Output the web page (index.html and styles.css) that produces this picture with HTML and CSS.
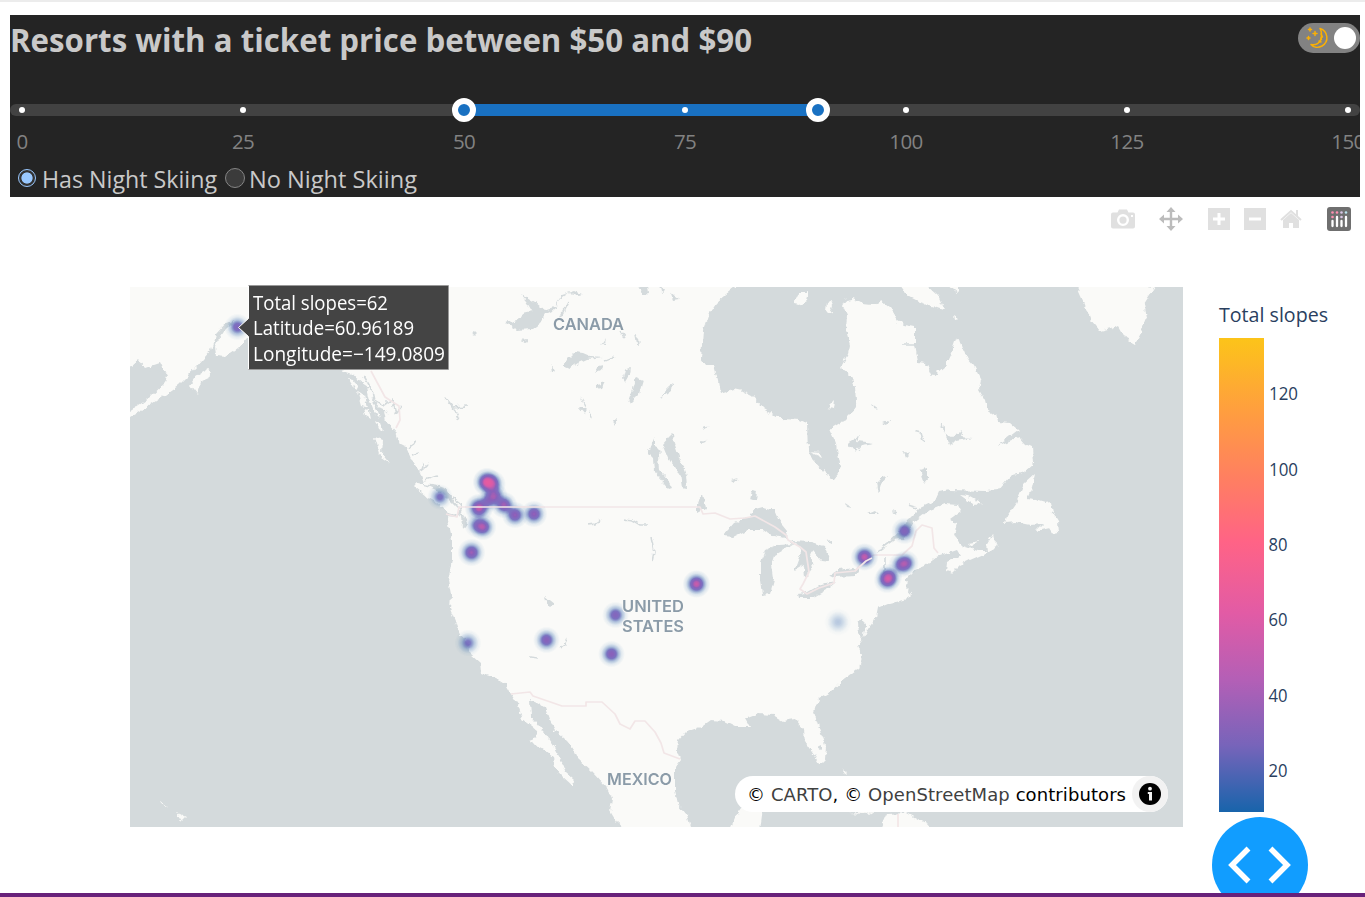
FILE: index.html
```html
<!DOCTYPE html>
<html lang="en">
<head>
<meta charset="utf-8">
<title>Ski resorts</title>
<link rel="stylesheet" href="styles.css">
</head>
<body>
<main class="page">
  <section class="panel">
    <header class="panel-head">
      <h1 class="title"><svg class="title-text" width="760" height="60"><text x="0" y="37" textLength="742" lengthAdjust="spacingAndGlyphs">Resorts with a ticket price between $50 and $90</text></svg></h1>
      <div class="switch">
        <svg width="23" height="23" viewBox="0 0 23 23" fill="none" stroke="#fab005" stroke-width="1.5" stroke-linecap="round" stroke-linejoin="round">
          <path d="M14 1.500c8 2.500 9.500 13 2 17.500c-4 2.200-8.500 1.500-11-1.500c5 1 9-1.500 10-5.500c.8-3.500 1-7-1-10.500z"/>
          <path d="M15 7l1.500 3l-1.500 1l.5 1.500M13 14l2 1"/>
          <path d="M4 1v3M2.500 2.500h3M9 4.500v4M7 6.500h4M2.500 9.500v3M1 11h3"/>
        </svg>
        <span class="switch-knob"></span>
      </div>
    </header>
    <div class="slider">
      <div class="track">
        <span class="range"></span>
        <i class="dot"></i><i class="dot"></i><i class="dot"></i><i class="dot"></i><i class="dot"></i><i class="dot"></i><i class="dot"></i>
        <span class="thumb thumb-min"></span><span class="thumb thumb-max"></span>
      </div>
      <div class="marks"><span>0</span><span>25</span><span>50</span><span>75</span><span>100</span><span>125</span><span>150</span></div>
    </div>
    <div class="radios">
      <span class="radio radio-on"></span><svg width="176" height="34"><text x="0" y="26" textLength="175" lengthAdjust="spacingAndGlyphs">Has Night Skiing</text></svg>
      <span class="radio"></span><svg width="170" height="34"><text x="0" y="26" textLength="168" lengthAdjust="spacingAndGlyphs">No Night Skiing</text></svg>
    </div>
  </section>

  <nav class="modebar">
    <svg class="camera" width="24" height="24" viewBox="0 0 24 24"><path fill="#e0e0e0" fill-rule="evenodd" d="M2 5.500h4.500l1.500-3h8l1.500 3H22q2 0 2 2v12q0 2-2 2H2q-2 0-2-2V7.500q0-2 2-2zM12 7a6 6 0 1 0 0 12a6 6 0 0 0 0-12zm0 2.500a3.600 3.600 0 1 1 0 7.200a3.600 3.600 0 0 1 0-7.200zM20 8v2h2V8z"/></svg>
    <svg class="pan" width="24" height="24" viewBox="0 0 24 24"><path fill="#bcbcbc" d="M12 0l4.500 5H13.200v5.800H19V7.500l5 4.500l-5 4.500V13.200h-5.800V19h3.300L12 24l-4.500-5H10.800v-5.800H5v3.300L0 12l5-4.500V10.800h5.800V5H7.500z"/></svg>
    <svg class="zoom-in" width="22" height="22"><path fill="#e0e0e0" d="M0 0h22v22H0z"/><path fill="#fff" d="M9.500 5h3v4.500h4.500v3h-4.500v4.500h-3v-4.500H5v-3h4.500z"/></svg>
    <svg class="zoom-out" width="22" height="22"><path fill="#e0e0e0" d="M0 0h22v22H0z"/><path fill="#fff" d="M5 9.500h12v3H5z"/></svg>
    <svg class="home" width="22" height="20" viewBox="0 0 22 20"><path fill="#e0e0e0" d="M11 4l8 7v8h-6v-5H9v5H3v-8z"/><path fill="none" stroke="#e0e0e0" stroke-width="2" d="M1 11L11 2l10 9M17 1v6"/></svg>
    <svg class="brand" width="24" height="24"><rect width="24" height="24" rx="3" fill="#6f6f6f"/><path stroke="#fff" stroke-width="2.300" stroke-linecap="round" d="M5.500 14v5M10 10v9M14.500 14v5M19 10v9"/><g fill="#ff8fb1"><circle cx="5.500" cy="5.500" r="1.300"/><circle cx="5.500" cy="10" r="1.300"/><circle cx="10" cy="5.500" r="1.300"/></g><circle cx="14.500" cy="5.500" r="1.300" fill="#d9c6e6"/><circle cx="14.500" cy="10" r="1.300" fill="#d9c6e6"/><circle cx="19" cy="5.500" r="1.300" fill="#b9e3ee"/></svg>
  </nav>

  <section class="plot">
    <div class="map">
      <svg class="map-canvas" viewBox="130 287 1053 540" width="1053" height="540">
        <defs>
          <filter id="coast" x="130" y="287" width="1053" height="540" filterUnits="userSpaceOnUse">
            <feTurbulence type="fractalNoise" baseFrequency=".17" numOctaves="2" seed="4" result="n"/>
            <feDisplacementMap in="SourceGraphic" in2="n" scale="6" xChannelSelector="R" yChannelSelector="G"/>
          </filter>
          <radialGradient id="blob">
            <stop offset="0" stop-color="#fff"/><stop offset=".18" stop-color="#fff" stop-opacity=".9"/><stop offset=".35" stop-color="#fff" stop-opacity=".65"/><stop offset=".5" stop-color="#fff" stop-opacity=".4"/><stop offset=".75" stop-color="#fff" stop-opacity=".1"/><stop offset="1" stop-color="#fff" stop-opacity="0"/>
          </radialGradient>
          <filter id="density" x="130" y="287" width="1053" height="540" filterUnits="userSpaceOnUse" color-interpolation-filters="sRGB">
            <feColorMatrix values="0 0 0 1 0  0 0 0 1 0  0 0 0 1 0  0 0 0 1 0"/>
            <feComponentTransfer>
              <feFuncR type="table" tableValues=".09 .2 .4 .54 .84 .96"/>
              <feFuncG type="table" tableValues=".39 .39 .36 .38 .36 .36"/>
              <feFuncB type="table" tableValues=".67 .68 .72 .73 .66 .6"/>
              <feFuncA type="table" tableValues="0 .35 .86 1 1 1"/>
            </feComponentTransfer>
          </filter>
        </defs>
        <g filter="url(#coast)">
          <path class="water" d="M100 260h1110v600H100z"/>
          <g class="land">
            <path d="M110 270H735L735 287L725 295L716 303L708 315L703 330L701 358L706 365L714 365L718 380L720 393L733 389L742 391L752 396L763 408L782 419L800 420L807 423L808 452L813 460L825 473L834 479L838 474L840 463L837 450L835 440L830 429L845 420L853 412L857 401L856 388L850 375L841 367L848 354L850 345L846 330L847 315L843 306L846 300L853 299L863 304L872 305L881 301L890 308L898 321L905 325L915 327L915 345L918 362L926 363L932 377L945 366L951 353L956 338L960 341L965 353L968 359L974 366L981 380L979 390L985 400L987 409L996 415L998 422L1010 423L1018 430L997 446L1019 437L1025 444L1032 447L1033 464L1024 472L1010 476L998 490L985 491L950 490L939 492L935 501L920 508L910 518L900 531L890 540L904 539L914 522L930 510L945 504L958 505L961 511L950 519L957 524L954 533L957 540L963 546L978 551L987 551L986 545L993 533L995 543L999 546L986 553L970 560L960 565L952 573L946 571L947 563L960 555L957 550L937 557L925 566L915 570L907 578L906 588L912 595L908 599L888 604L878 608L876 618L868 629L864 637L858 645L862 656L859 668L843 680L830 692L818 699L814 712L819 728L826 748L825 760L820 765L814 755L805 742L804 729L795 719L783 721L773 715L758 714L745 719L749 726L735 726L725 721L710 720L700 727L686 732L678 741L677 752L680 760L675 767L675 790L678 804L687 815L692 830H626L616 821L610 811L612 799L606 787L592 772L578 759L574 750L566 740L555 730L549 719L545 708L537 703L530 700L531 716L543 731L553 746L560 758L566 773L574 780L573 786L562 776L555 768L554 757L545 750L529 741L537 738L536 730L523 720L518 705L511 694L506 685L495 678L481 673L480 663L471 655L469 645L460 635L455 621L450 609L451 595L448 580L452 560L452 538L447 516L456 517L462 514L463 529L467 523L462 511L453 500L446 489L438 486L424 484L420 472L412 461L406 447L400 444L396 432L390 425L388 412L380 408L373 400L369 390L357 380L352 374L342 371L340 340L260 335L247 337L238 348L225 357L216 356L215 345L224 331L235 320L226 323L216 334L211 350L203 359L190 374L178 386L162 397L150 405L130 417L110 424V406L130 411L142 403L150 397L165 383L167 377L160 363L145 368L138 360L130 367L110 370z"/>
            <path d="M415 483l12 3l14 6l9 9l9 9l0 6l-10-3l-12-10l-10-6l-11-9z"/>
            <path d="M375 437l8 3l-1 14l8 10l-9-6zM348 378l5 1l5 10l-4-1zM358 391l6 4l3 12l-5-2zM366 388l5 4l2 14l-4-5zM364 408l5 2l2 9l-5-3zM371 404l5 3l4 11l-5-3zM375 420l5 3l3 8l-5-3zM384 410l6 5l2 12l-6-5zM190 385l6-9l12-7l2 8l-9 4l-4 13z"/>
            <path d="M1035 474L1032 487L1027 499L1035 500L1045 503L1051 502L1053 513L1058 521L1059 533L1054 534L1050 528L1036 531L1043 524L1030 525L1015 522L1005 523L1007 516L1016 503L1024 484zM960 495l9 1l14 8l-9 1zM962 537l6 6l12-2l-9 5zM900 285l8 11l12 6l24 8l-6-14l-12-11zM948 285l10 8v-8zM953 316l5 3l-4 1z"/>
            <path d="M1073 280l4 7l7 16l6 16l10 12l12-3l6-3l8 14l9 5l5-9l7-17l-3-14l11-17z"/>
            <path d="M794 304l5-11h10l-2 7l-8 5zM826 303l5-3l2 5l-3 9l-5-3zM828 408l7-7l-1 8zM810 452l10 1l2 4z"/>
            <path d="M730 830l6-15l5-7h22l-3 22zM844 767l2 7l-3-2zM849 753l2 5zM848 813l25-2l-5 3zM880 830l7-16l20-1l22 12v8zM160 801l7 6l-6-3zM176 812l10 5l-4 4z"/>
          </g>
          <g class="water">
            <path d="M520 294l15 9l9 7l10-3l8-12l13-4l7 3l-3 1l-10-2l-9 6l-7 12l-8 4l-5 8l-8 6l-15 1l-12-7l14-3l4-7l9-2l-6-10zM562 366l5-6l8-8l8 1l7 3l14 1l-17 2l-9 4l-9 6zM551 364l4 7l-3 2zM598 367l5-1l-2 4l-7 3zM625 370l5-2l-1 6l-4 7l-2-3zM636 377l7 3l-4 14l-9 9l-2-1l5-13zM670 383l3 1l-1 6l-11 8l5-8zM580 396l6 10l-1 8l-5-6h5zM635 333l4 5l1 7l-3-1zM520 340l8-1l-2 3zM612 419l6-1l-4 6zM589 410l2 4l-2 5zM596 384l9-2l-3 6l-6 1zM606 339l-4 6l3-2zM638 285l5 10l5-1l-1-9zM670 292l9 7l-6 1zM660 285l2 8l3-2zM473 331l3 3l-2 2z"/>
            <path d="M663 444l6-7l4-4l1 9l5 15l7 18l1 13l-5-1l-2-14l-10-12zM648 453l7-17v11l7 4l-4 4l1 15l8 8l5 10l-3 1l-15-18l-1-13z"/>
            <path d="M723 536l11-13l15-6l6-8l8-2l11 3l4 9l9 11l-1 8l-13-2l-9-6h-17l-14 7zM760 563l6-14l12-5l16-1l-12 8l-7 4l-3 9l2 15l-4 15l-8 1l-2-14zM791 541l20 1l13 4l6 15l-9-1l-9-10l-2 5l3 12l-8 12l-1-14l-10 6l8-22zM797 594l10-1l14-8l15-3l-10 8l-14 8l-14 0zM830 575l8-5l15-2l7 1l-4 7l-22 1z"/>
            <path d="M697 503l6-9l3 14l-9 5zM752 490l5 1l-1 10l-6-2zM704 427l6-2l-7 5zM700 440l7 1l-5 2zM739 441l7 1zM731 480l8-2l-5 4zM876 483l6-6l6-1l-7 8l-3 10zM882 423l10-4l-5 6zM872 404l7 5l-5-1zM847 443l12-7l-2 5l17 2l-13 2l-6 7zM940 423l4 10l8 4l10-6l-2 6l12 1l-16 3l-5 5zM920 470l7-2v9l-4 5zM846 504l6 4l-5-1zM868 514l7-3l3 3zM856 526l2 5zM825 541l7-1v3zM893 510l4 3l-3 1zM904 452l6 1l-4 4zM545 597l9 7l-3 2l-5-4zM818 747l4-2v5zM856 622l6-3l4 6l-3 15l-4-6l-1-12z"/>
          </g>
          <path class="river" d="M587 525l8-1l6-4M624 519l8 1l8 5l7 0M651 537l3 15l-2 10M560 648l5-4l3-6M530 657l9 1M907 531l-13 9l-17 12M884 557v17M445 397l8 10l6 13M453 407l14-1M560 318l8-16M605 361l10-4M620 331l5 6M913 431l8 2l3 10M942 423l2 10M908 505l10 3M902 344h14M364 376l8 14l2 10l10 6M384 405l8-6l4 14l5-6M356 380l12 8M371 410l14 14M404 470l6 8M412 455l7-2M408 448l8-6M424 463l-3 8M422 470l6-6M425 480l12-4M452 497l8 6l2 8M150 372l14-1"/>
        </g>
        <g class="border">
          <path d="M371 371l14 26l14 9l1 14l-4 8M446 514l11 3l2-10H700l3 7l12-1l15 6l15-1l10-2l20 11l11 8l2 5l12 7l6 5l3 20l-6 12l-3 5l7 5l12-6l15-5l1-10l20-2l10-12l9-4h28l10-9l4-15l6-6l10 3l2 20l4 5M511 694l19-2l3 4l29 10h24v-4h16l13 12l5 10l10 5l5-8h10l10 11l6 11l3 10l16 6M898 814v15"/>
        </g>
        <g filter="url(#density)" fill="url(#blob)">
          <circle cx="237.500" cy="327" r="13.500" opacity=".52"/><circle cx="440" cy="497" r="13" opacity=".44"/>
          <circle cx="487" cy="482" r="14.500" opacity=".86"/><circle cx="492" cy="484" r="14" opacity=".64"/>
          <circle cx="494" cy="496" r="14" opacity=".65"/><circle cx="488" cy="501" r="12" opacity=".4"/><circle cx="479" cy="508" r="14.500" opacity=".78"/><circle cx="504" cy="505" r="13.500" opacity=".68"/><circle cx="515" cy="515" r="13.500" opacity=".64"/><circle cx="534" cy="514" r="13.500" opacity=".64"/>
          <circle cx="483" cy="527" r="13.500" opacity=".67"/><circle cx="477" cy="525" r="13" opacity=".4"/><circle cx="471.500" cy="552.500" r="14" opacity=".66"/>
          <circle cx="468" cy="643" r="13.500" opacity=".42"/><circle cx="546.500" cy="640" r="13.500" opacity=".59"/><circle cx="615.500" cy="615" r="13.500" opacity=".55"/><circle cx="611.500" cy="654" r="13.500" opacity=".61"/><circle cx="696.500" cy="584" r="14" opacity=".78"/>
          <circle cx="904.500" cy="531" r="13.500" opacity=".55"/><circle cx="864.500" cy="557" r="14" opacity=".77"/><circle cx="906" cy="563" r="13" opacity=".58"/><circle cx="901" cy="565" r="13" opacity=".5"/><circle cx="889" cy="577" r="13.500" opacity=".62"/><circle cx="887" cy="580" r="13.500" opacity=".58"/><circle cx="838" cy="622" r="14" opacity=".19"/>
        </g>
        <path class="border" d="M466 507H544M855 571l11-10l6-3"/>
        <g class="country">
          <text x="553" y="330" textLength="71" lengthAdjust="spacingAndGlyphs">CANADA</text>
          <text x="622" y="612" textLength="62" lengthAdjust="spacingAndGlyphs">UNITED</text>
          <text x="622" y="632" textLength="62" lengthAdjust="spacingAndGlyphs">STATES</text>
          <text x="607" y="785" textLength="65" lengthAdjust="spacingAndGlyphs">MEXICO</text>
        </g>
      </svg>
      <div class="hover">
        <svg width="212" height="88" viewBox="238 284 212 88">
          <path d="M238.500 327.500l10-9V285.500h200v84h-200v-33z" fill="#444" stroke="#fff"/>
          <path d="M248.500 285.500h200v84h-200" fill="none" stroke="#999"/>
          <g class="hover-text"><text x="253" y="310" textLength="135" lengthAdjust="spacingAndGlyphs">Total slopes=62</text><text x="253" y="335" textLength="161" lengthAdjust="spacingAndGlyphs">Latitude=60.96189</text><text x="253" y="361" textLength="192" lengthAdjust="spacingAndGlyphs">Longitude=−149.0809</text></g>
        </svg>
      </div>
      <div class="credits">
        <svg width="379" height="24"><text x="0" y="19" textLength="379">© <tspan class="link">CARTO</tspan>, © <tspan class="link">OpenStreetMap</tspan> contributors</text></svg>
        <span class="info"><svg width="22" height="22"><circle cx="11" cy="11" r="11"/><circle cx="11" cy="5.700" r="1.900" fill="#f2f2f2"/><path d="M8.800 9h4.200v8.500h-3V11H8.800z" fill="#f2f2f2"/></svg></span>
      </div>
    </div>
    <aside class="legend">
      <svg width="140" height="520" viewBox="1215 300 140 520">
        <defs><linearGradient id="scale" x1="0" y1="0" x2="0" y2="1"><stop offset="0" stop-color="#fcc419"/><stop offset=".15" stop-color="#ff9f3e"/><stop offset=".3" stop-color="#ff7e62"/><stop offset=".43" stop-color="#ff6386"/><stop offset=".58" stop-color="#e25ba5"/><stop offset=".72" stop-color="#b45fb6"/><stop offset=".86" stop-color="#7764ba"/><stop offset="1" stop-color="#1864ab"/></linearGradient></defs>
        <rect x="1219" y="338" width="45" height="474" fill="url(#scale)"/>
        <text class="legend-title" x="1219" y="322" textLength="109" lengthAdjust="spacingAndGlyphs">Total slopes</text>
        <g class="legend-tick"><text x="1269" y="400" textLength="29" lengthAdjust="spacingAndGlyphs">120</text><text x="1269" y="476" textLength="29" lengthAdjust="spacingAndGlyphs">100</text><text x="1268.500" y="551" textLength="19" lengthAdjust="spacingAndGlyphs">80</text><text x="1268.500" y="626" textLength="19" lengthAdjust="spacingAndGlyphs">60</text><text x="1268.500" y="702" textLength="19" lengthAdjust="spacingAndGlyphs">40</text><text x="1268.500" y="777" textLength="19" lengthAdjust="spacingAndGlyphs">20</text></g>
      </svg>
    </aside>
  </section>
  <button class="debug"><svg width="96" height="96" fill="none" stroke="#fff" stroke-width="5.500"><path d="M36.500 31.500L20 48l16.500 16.500M58.500 31.500L75 48L58.500 64.500"/></svg></button>
  <footer class="bottom-bar"></footer>
</main>
</body>
</html>
```
FILE: styles.css
```css
* { box-sizing: border-box; }
body { margin: 0; background: #fff; font-family: "Open Sans", "Noto Sans", sans-serif; }
svg { display: block; flex: none; }
.page { position: relative; display: flex; flex-direction: column; width: 1365px; height: 897px; overflow: hidden; border-top: 2px solid #ececec; padding-top: 13px; }
.panel { flex: none; width: 1350px; height: 182px; margin-left: 10px; background: #242424; color: #c9c9c9; overflow: hidden; }
.panel-head { display: flex; justify-content: space-between; height: 83px; }
.title { margin: 0; }
.title-text { fill: #c9c9c9; font: 700 32px "Open Sans", sans-serif; }
.switch { display: flex; align-items: center; justify-content: space-between; width: 62px; height: 30px; margin-top: 8px; padding: 0 4px 0 8px; border-radius: 15px; background: #828282; }
.switch-knob { width: 22px; height: 22px; border-radius: 50%; background: #fff; }
.slider { padding-top: 6px; }
.track { position: relative; display: flex; align-items: center; justify-content: space-between; height: 12px; padding: 0 9px; border-radius: 6px; background: #424242; }
.range { position: absolute; left: 454px; width: 354px; height: 12px; background: #1971c2; }
.dot { position: relative; width: 6px; height: 6px; border-radius: 50%; background: #fff; }
.thumb { position: absolute; width: 24px; height: 24px; border: 6px solid #fff; border-radius: 50%; background: #1971c2; }
.thumb-min { left: 442px; }
.thumb-max { left: 796px; }
.marks { display: flex; justify-content: space-between; height: 47px; padding: 10px 12px 0; color: #828282; font-size: 20.500px; line-height: 31px; letter-spacing: -.6px; }
.marks span { display: flex; justify-content: center; width: 0; }
.radios { display: flex; align-items: center; height: 32px; padding-left: 8px; fill: #c9c9c9; font-size: 23.500px; }
.radio { flex: none; width: 20px; height: 20px; margin: -3px 4px 0 7px; border: 1.500px solid #858585; border-radius: 50%; background: #3b3b3b; }
.radio-on { width: 18px; height: 18px; margin: -3px 6px 0 0; border-color: #99c8ff; background: radial-gradient(circle, #99c8ff 5.200px, #333 6px); }
.modebar { display: flex; align-items: center; height: 44px; padding-left: 1111px; }
.pan { margin-left: 24px; }
.zoom-in { margin-left: 25px; }
.zoom-out, .home { margin-left: 14px; }
.brand { margin-left: 25px; }
.plot { display: flex; padding: 46px 0 0 130px; }
.map { position: relative; flex: none; width: 1053px; height: 540px; }
.water { fill: #d4dadc; }
.land { fill: #fafaf8; }
.river { fill: none; stroke: #d4dadc; stroke-width: 1.600px; }
.border { fill: none; stroke: #f2e6e7; stroke-width: 1.700px; stroke-linejoin: round; }
.country { fill: #8b9ba8; stroke: #fafaf8; stroke-width: 1.500px; paint-order: stroke; font: 600 16px Inter, sans-serif; }
.hover { position: absolute; left: 108px; top: -3px; }
.hover-text { fill: #fff; font-size: 19.500px; }
.credits { position: absolute; right: 15px; bottom: 15px; display: flex; align-items: center; justify-content: space-between; width: 433px; height: 36px; padding-left: 12px; border-radius: 18px; background: #fff; font: 18px "DejaVu Sans", sans-serif; }
.link { fill: #404040; }
.info { display: grid; place-items: center; width: 36px; height: 36px; border-radius: 50%; background: #f2f2f2; }
.legend { margin: 13px 0 0 32px; fill: #2a3f5f; }
.legend-title { font-size: 20px; }
.legend-tick { font-size: 17.500px; }
.debug { position: absolute; left: 1212px; top: 815px; width: 96px; height: 96px; padding: 0; border: 0; border-radius: 50%; background: #119dff; }
.bottom-bar { position: absolute; left: 0; bottom: 0; width: 100%; height: 4px; background: #68217a; }
```
